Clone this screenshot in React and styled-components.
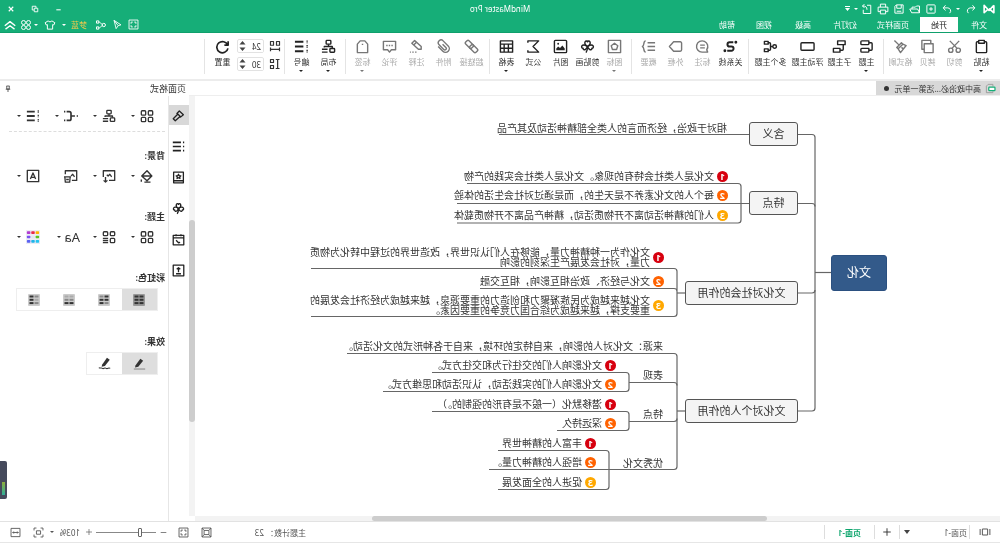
import React, { useState } from "react";
import styled, { createGlobalStyle } from "styled-components";

const GlobalStyle = createGlobalStyle`
  * {
    box-sizing: border-box;
  }
  body {
    margin: 0;
    overflow: hidden;
    background: #fff;
  }
  body, button, input, select {
    font-family: "Noto Sans", "Noto Sans CJK SC", sans-serif;
    font-size: 8px;
    color: #333;
  }
  button {
    border: 0;
    padding: 0;
    background: none;
    cursor: pointer;
  }
`;

/* the whole window is shown flipped left to right */
const Window = styled.div`
  display: flex;
  flex-direction: column;
  height: 100vh;
  transform: scaleX(-1);
`;

const Header = styled.header`
  background: #16ae78;
  color: #fff;
  border-bottom: 1px solid #0fa06c;
`;

const TitleBar = styled.div`
  display: grid;
  grid-template-columns: 1fr auto 1fr;
  align-items: center;
  height: 17px;
  padding: 0 4px;
`;

const QuickTools = styled.div`
  display: flex;
  align-items: center;
  gap: 2px;
`;

const HeaderButton = styled.button`
  display: flex;
  align-items: center;
  justify-content: center;
  width: ${(props) => props.$w || 14}px;
  height: 16px;
  color: ${(props) => props.$color || "#fff"};
`;

const AppName = styled.h1`
  margin: 0;
  font-size: 8px;
  font-weight: 400;
  line-height: 16px;
`;

const WindowControls = styled.div`
  display: flex;
  justify-content: flex-end;
  gap: 10px;
`;

const MenuBar = styled.div`
  display: flex;
  justify-content: space-between;
  height: 15px;
`;

const Tabs = styled.nav`
  display: flex;
`;

const Tab = styled.button`
  width: ${(props) => props.$w}px;
  color: ${(props) => (props.$active ? "#222" : "#fff")};
  background: ${(props) => (props.$active ? "#fff" : "none")};
  line-height: 15px;
`;

const MenuTools = styled.div`
  display: flex;
  align-items: center;
  padding-right: 2px;
`;

const Ribbon = styled.div`
  display: flex;
  height: 48px;
  border-bottom: 2px solid #ececec;
`;

const RibbonGroup = styled.div`
  display: flex;
  margin: 6px 0 5px;
  padding: 0 3px;
  padding-left: ${(props) => props.$lead || 3}px;
  border-right: 1px solid #e4e4e4;
`;

const Caret = styled.i`
  flex: none;
  border: 2px solid transparent;
  border-top-color: currentColor;
  border-bottom-width: 0;
`;

const RibbonButton = styled.button`
  display: flex;
  flex-direction: column;
  align-items: center;
  width: ${(props) => props.$w || 27}px;
  color: ${(props) => (props.$off ? "#777" : "#222")};

  ${Caret} {
    margin-top: 2px;
  }
`;

const RibbonLabel = styled.span`
  margin-top: 2px;
  line-height: 12px;
  white-space: nowrap;
  color: ${(props) => (props.$off ? "#aaa" : "#333")};
`;

const Spacing = styled.div`
  display: flex;
  flex-direction: column;
  gap: 4px;
`;

const SpacingRow = styled.label`
  display: flex;
  align-items: center;
  gap: 5px;
  height: 14px;
`;

const SpinBox = styled.span`
  display: flex;
  align-items: center;
  width: 27px;
  height: 14px;
  border: 1px solid #e2e2e2;
  border-radius: 2px;
`;

const SpinInput = styled.input`
  flex: 1;
  min-width: 0;
  padding: 0 0 0 2px;
  border: 0;
  outline: none;
`;

const Workspace = styled.div`
  display: flex;
  flex: 1;
  min-height: 0;
`;

const Editor = styled.main`
  display: flex;
  flex-direction: column;
  flex: 1;
  min-width: 0;
`;

const DocTabs = styled.div`
  display: flex;
  flex: none;
  height: 15px;
  border-bottom: 1px solid #eee;
`;

const DocTab = styled.button`
  display: flex;
  align-items: center;
  gap: 4px;
  width: 124px;
  padding-left: 4px;
  background: #d8d8d8;
  white-space: nowrap;
`;

const Dot = styled.i`
  width: 5px;
  height: 5px;
  margin-left: 2px;
  border-radius: 50%;
  background: #333;
`;

const EditorArea = styled.div`
  display: grid;
  flex: 1;
  min-height: 0;
  grid-template-columns: 1fr 6px;
  grid-template-rows: 1fr 5px;
`;

const Board = styled.div`
  position: relative;
  overflow: hidden;
`;

const Wires = styled.svg`
  position: absolute;
  left: 0;
  top: 0;
`;

const Node = styled.div`
  position: absolute;
  left: ${(props) => props.$x}px;
  top: ${(props) => props.$y}px;
  width: ${(props) => props.$w}px;
  height: 24px;
  border: 1px solid #555;
  border-radius: 3px;
  background: #f4f4f4;
  font-size: 11px;
  line-height: 22px;
  text-align: center;
`;

const RootNode = styled(Node)`
  height: 36px;
  border-color: #2b5080;
  background: #335a8a;
  color: #fff;
  font-size: 12px;
  line-height: 34px;
`;

const Topic = styled.div`
  position: absolute;
  left: ${(props) => props.$x}px;
  top: ${(props) => props.$y}px;
  display: flex;
  align-items: center;
  gap: 3px;
  min-height: 12px;
  font-size: 10px;
  line-height: 10px;
  white-space: pre;
`;

const badgeColors = { 1: "#d7000f", 2: "#ff6200", 3: "#ffa800" };

const Badge = styled.b`
  width: 11px;
  height: 11px;
  border-radius: 50%;
  background: ${(props) => badgeColors[props.$n]};
  color: #fff;
  font-size: 9px;
  line-height: 11px;
  text-align: center;
`;

const VTrack = styled.div`
  background: #f3f3f3;
  padding-top: 124px;
`;

const VThumb = styled.div`
  height: 202px;
  border-radius: 3px;
  background: #cdcdcd;
`;

const HTrack = styled.div`
  background: #f3f3f3;
`;

const HThumb = styled.div`
  height: 5px;
  width: 49%;
  margin-left: 29%;
  border-radius: 3px;
  background: #cdcdcd;
`;

const Side = styled.aside`
  display: flex;
  flex-direction: column;
  flex: none;
  width: 189px;
`;

const SideHeader = styled.div`
  display: flex;
  align-items: center;
  justify-content: space-between;
  height: 15px;
  padding: 0 4px 0 3px;
`;

const SideTitle = styled.h2`
  margin: 0;
  font-size: 9px;
  font-weight: 400;
  line-height: 15px;
`;

const SideBody = styled.div`
  display: flex;
  flex: 1;
`;

const Strip = styled.div`
  display: flex;
  flex-direction: column;
  flex: none;
  gap: 11px;
  width: 21px;
  padding-top: 9px;
  border-right: 1px solid #e6e6e6;
`;

const StripButton = styled.button`
  display: flex;
  align-items: center;
  justify-content: center;
  height: 20px;
  color: #222;
  background: ${(props) => (props.$active ? "#d8d8d8" : "none")};
`;

const Panel = styled.div`
  flex: 1;
  min-width: 0;
  padding: 10px 9px 0 3px;
`;

const Section = styled.section`
  margin-bottom: ${(props) => (props.$divided ? 18 : 25)}px;
  padding-bottom: ${(props) => (props.$divided ? 5 : 0)}px;
  border-bottom: ${(props) => (props.$divided ? "1px dashed #ddd" : "0")};
`;

const SectionTitle = styled.h3`
  margin: 0 0 5px;
  font-size: 9px;
  font-weight: 600;
  line-height: 11px;
`;

const ToolRow = styled.div`
  display: flex;
  padding-left: 9px;
`;

const ToolButton = styled.button`
  display: flex;
  flex: none;
  align-items: center;
  gap: 3px;
  width: 38px;
  height: 20px;
  color: #333;

  svg {
    padding: 2px;
  }
`;

const FontTool = styled(ToolButton)`
  font-size: 13px;
`;

const Segmented = styled.div`
  display: inline-flex;
  margin-left: 7px;
  border: 1px solid #eee;
`;

const Segment = styled.button`
  display: flex;
  align-items: center;
  justify-content: center;
  width: 35px;
  height: 21px;
  background: ${(props) => (props.$active ? "#dedede" : "#fff")};
`;

const EdgeHandle = styled.div`
  position: absolute;
  right: 0;
  top: 461px;
  display: flex;
  align-items: flex-end;
  width: 7px;
  height: 38px;
  padding: 4px 2px;
  border-radius: 2px 0 0 2px;
  background: #454a5c;
`;

const EdgeLevel = styled.div`
  width: 3px;
  height: 13px;
  background: linear-gradient(#8fae3c, #2fae9a);
`;

const StatusBar = styled.footer`
  display: flex;
  flex: none;
  align-items: center;
  height: 22px;
  border-top: 1px solid #e2e2e2;
  border-bottom: 1px solid #e6e6e6;
`;

const StatusCell = styled.div`
  display: flex;
  align-items: center;
  justify-content: ${(props) => props.$justify || "center"};
  width: ${(props) => props.$w}px;
  height: 14px;
  padding-left: ${(props) => props.$lead || 0}px;
  border-right: ${(props) => (props.$line ? "1px solid #ddd" : "0")};
  color: #555;
`;

const StatusSelect = styled.select`
  appearance: none;
  padding: 0;
  border: 0;
  outline: none;
  background: none;
  flex: 1;
  color: #555;
`;

const IconButton = styled.button`
  display: flex;
`;

const PageTab = styled.button`
  color: #0da56d;
  font-weight: 600;
`;

const StatusRight = styled.div`
  display: flex;
  align-items: center;
  margin-left: auto;
  padding-right: 4px;
`;

const StatusButton = styled.button`
  display: flex;
  align-items: center;
  justify-content: center;
  width: ${(props) => props.$w || 23}px;
  height: 16px;
  color: #555;
`;

const ZoomSlider = styled.input`
  appearance: none;
  width: 60px;
  height: 12px;
  margin: 0;
  background: linear-gradient(#888, #888) center / 100% 1px no-repeat;

  &::-webkit-slider-thumb {
    appearance: none;
    width: 4px;
    height: 9px;
    border: 1px solid #666;
    border-radius: 1px;
    background: #fff;
  }
`;

// 16 x 16 line drawings
const icons = {
  logo: <path d="M1.500 3v10L8 7.500M1.500 3 8 10l6.500-7v10L9.500 8.500" strokeWidth="2.200" />,
  undo: <path d="M6 3 3 6.500 6 10M3 6.500h6a4 4 0 0 1 2.500 7" />,
  redo: <path d="M10 3l3 3.500L10 10M13 6.500H7a4 4 0 0 0-2.500 7" />,
  newFile: <path d="M3.500 2.500h9a1 1 0 0 1 1 1v9a1 1 0 0 1-1 1h-9a1 1 0 0 1-1-1v-9a1 1 0 0 1 1-1zM8 5.500v5M5.500 8h5" />,
  folder: <path d="M2 13V4h4l1.500 1.500H12V8M2 13l2.500-5H15l-2.500 5z" />,
  save: <path d="M2.500 2.500h9l2 2v9h-11zM5 2.500V7h6V2.500M5 11h6" />,
  print: <path d="M4.500 5.500v-4h7v4M4.500 11.500h-3v-6h13v6h-3M4.500 9.500h7v5h-7z" />,
  exportFile: <path d="M8 3H3v11h10V9M8 9c0-4 2-5 6-5M11.500 1.500 14 4l-2.500 2.500" />,
  close: <path d="M3.500 3.500l9 9M12.500 3.500l-9 9" strokeWidth="2.200" />,
  restore: <path d="M2.500 6.500h7v7h-7zM6 6V2.500h7.500V10H10" strokeWidth="1.800" />,
  minimize: <path d="M3 11h10" strokeWidth="2.400" />,
  fullscreen: <path d="M1.500 1.500h13v13h-13zM4.500 7V4.500H7M9 4.500h2.500V7M11.500 9v2.500H9M7 11.500H4.500V9" />,
  send: <path d="M13 2 3 8.500l4 1.200L10 14zM13 2 7 9.700" />,
  share: <path d="M6.500 8a2.200 2.200 0 1 1-4.400 0 2.200 2.200 0 0 1 4.400 0zM6 7c2.500-.5 3-3 5-3M6 9c2.500.5 3 3 5 3M11 2.500h3v3h-3zM11 10.500h3v3h-3z" />,
  shirt: <path d="M5.500 2.500 1.500 5l1.500 3 1.500-.5v6h7v-6L13 8l1.500-3-4-2.500c-1 1.600-4 1.600-5 0z" />,
  petals: (
    <>
      <circle cx="4.700" cy="4.700" r="2.700" />
      <circle cx="11.300" cy="4.700" r="2.700" />
      <circle cx="4.700" cy="11.300" r="2.700" />
      <circle cx="11.300" cy="11.300" r="2.700" />
    </>
  ),
  collapse: <path d="M1 9l7-5.500L15 9M2 13.500 8 9l6 4.500" strokeWidth="1.800" />,
  paste: <path d="M5 3H3.500a1 1 0 0 0-1 1v9.500a1 1 0 0 0 1 1h9a1 1 0 0 0 1-1V4a1 1 0 0 0-1-1H11M5 1.500h6v3H5z" />,
  cut: (
    <>
      <circle cx="4" cy="12" r="2.300" />
      <circle cx="12" cy="12" r="2.300" />
      <path d="M5.200 10 13 2M10.800 10 3 2" />
    </>
  ),
  copy: <path d="M2 5h9.500v9.500H2zM4.500 4.500v-3H14V11h-2" />,
  painter: <path d="M14.500 1.500 10 6M7 4l5 5-1.500 1.500-5-5zM5.500 5.500 2 7l6 7.500 2.500-4M5 10.500l2-1.500" />,
  topic: <path d="M5.500 2h7.500a1 1 0 0 1 1 1v2a1 1 0 0 1-1 1H6.500a1 1 0 0 1-1-1zM5.500 10h7.500a1 1 0 0 1 1 1v2a1 1 0 0 1-1 1H6.500a1 1 0 0 1-1-1zM5.500 4H3a1 1 0 0 0-1 1v6a1 1 0 0 0 1 1h2.500" />,
  subtopic: <path d="M2 2h8v4H2zM7.500 10h7v4h-7zM4 6v5a1 1 0 0 0 1 1h2.500" />,
  floating: <rect x="1" y="4" width="14" height="8" rx="1" />,
  multi: <path d="M5.500 8a1.900 1.900 0 1 1-3.800 0 1.900 1.900 0 0 1 3.800 0zM5.500 8H8M10.500 4H9a1 1 0 0 0-1 1v6a1 1 0 0 0 1 1h1.500M10.500 2.500h4v3h-4zM10.500 10.500h4v3h-4z" />,
  relation: (
    <>
      <path d="M5 3.500h4a2.200 2.200 0 0 1 0 4.500H7a2.200 2.200 0 0 0 0 4.500h4.500" strokeWidth="2.100" />
      <circle cx="2.300" cy="3.500" r=".8" fill="currentColor" />
      <circle cx="14" cy="12.500" r=".8" fill="currentColor" />
    </>
  ),
  callout: <path d="M2.500 14h6A6 6 0 1 0 3.500 11.500zM5.500 6.500h5M5.500 9.500h5" />,
  outline: <path d="M3 3h7l4.500 5L10 13H3a1.500 1.500 0 0 1-1.500-1.500v-7A1.500 1.500 0 0 1 3 3z" />,
  summary: <path d="M1 4h8M1 8h8M1 12h8M11 2c3 0 1 5 3.500 6-2.500 1-.5 6-3.500 6" />,
  mark: <path d="M1.500 1.500h13v13h-13zM8 4.500l3.500 2.700-1.300 4H5.800l-1.300-4z" />,
  clover: (
    <>
      <path d="M8 8C5.500 6.500 4.600 4.800 5.400 3 6.200 1.600 7.500 2 8 3c.5-1 1.800-1.400 2.600 0C11.400 4.800 10.500 6.500 8 8z" />
      <path d="M8 8C5.600 6 3 5.800 2 7.400c-.8 1.600.2 2.600 1.300 2.400-.1 1.400 1.200 2.200 2.500 1.300C7.200 10.200 7.700 9 8 8z" />
      <path d="M8 8c2.400-2 5-2.200 6-.6.8 1.600-.2 2.600-1.300 2.400.1 1.400-1.200 2.200-2.500 1.300C8.800 10.200 8.300 9 8 8z" />
      <path d="M8 8c0 3 .5 5 1.600 6.500" />
    </>
  ),
  picture: (
    <>
      <rect x="1.500" y="1.500" width="13" height="13" rx="1" />
      <path d="M3.500 12v-2L6 7l2.500 2.500L10.500 8l2 2v2z" fill="currentColor" stroke="none" />
      <circle cx="10.500" cy="5" r="1" fill="currentColor" stroke="none" />
    </>
  ),
  sigma: <path d="M14 4V2H2.500l6 6-6 6H14v-2" />,
  table: <path d="M1.500 2h13v12h-13zM1.500 5.500h13M1.500 9.800h13M6 5.500V14M10.500 5.500V14" />,
  link: (
    <>
      <rect x="-4.500" y="-2.500" width="9" height="5" rx="1.500" transform="translate(10.300 5.700) rotate(-45)" />
      <rect x="-4.500" y="-2.500" width="9" height="5" rx="1.500" transform="translate(5.700 10.300) rotate(-45)" />
    </>
  ),
  clip: <path d="M9 5.500 5.500 9A1.500 1.500 0 0 0 7.700 11.200l5-5A3 3 0 0 0 8.400 2L3 7.400a4 4 0 0 0 5.700 5.700l5-5" />,
  note: <path d="M3 11V8l7-6.500 3 3L6 11zM8 3.500l3 3M8 14h1.500M11 14h1.500M14 14h1" />,
  comment: <path d="M1.500 2.500h13v9H10L8 14l-2-2.500H1.500zM4.500 7h1.500M7.300 7h1.500M10 7h1.500" />,
  label: <path d="M2.500 14V5.500L5.500 2h5l3 3.500V14a.5.500 0 0 1-.5.500H3a.5.500 0 0 1-.5-.5zM8 5v1.500" />,
  tree: (
    <>
      <rect x="5.500" y="1.500" width="5" height="4" rx=".8" />
      <path d="M8 5.500V8M4 10V8h8.500v1" />
      <rect x="1.500" y="10.200" width="5" height="4" rx=".8" />
      <path d="M9 11h6M9 14h6" />
    </>
  ),
  numbered: (
    <>
      <path d="M6 3h9M6 8h9M6 13h9" strokeWidth="2.200" />
      <path d="M2 1.500v3M2 6.500v3M2 11.500v3" strokeWidth="1.400" strokeDasharray="1.500 .7" />
    </>
  ),
  hSpace: <path d="M2 2h4v5H2zM10 2h4v5h-4zM2 10v5M14 10v5M2 12.500h12" />,
  vSpace: <path d="M2 2h5M2 14h5M4.500 2v12M10 2h4v4h-4zM10 10h4v4h-4z" />,
  reset: <path d="M2 2.500v4h4M2.500 6.500a6 6 0 1 1-.3 3.500" strokeWidth="1.800" />,
  doc: (
    <>
      <path d="M4.500 5V2h7L14 4.500V14H4.500v-2" stroke="#999" />
      <rect x="1.500" y="6" width="9" height="5" rx="1" fill="#fff" stroke="#16ae78" strokeWidth="1.800" />
    </>
  ),
  pin: <path d="M5 2h6M5.500 2v6h5V2M3.500 8.500h9M8 9v5" strokeWidth="1.500" />,
  brush: <path d="M9 2.500 14 7l-3.500 3-1-.5L4 14.500 1.500 12 7 6.500 6 5.500zM6.500 5.500l4 4" transform="matrix(-1 0 0 1 16 0)" />,
  list: <path d="M1 3h1.500M5 3h10M1 8h1.500M5 8h10M1 13h1.500M5 13h10" strokeWidth="2.100" />,
  iconBook: <path d="M2 1.500h12v13H2zM2 12h12M8 4l.9 1.800 2 .2-1.500 1.300.4 2L8 8.300l-1.800 1 .4-2L5.100 6l2-.2z" />,
  calendar: <path d="M1.500 3h13v11.500h-13zM1.500 6h13M5 1.500V4M11 1.500V4M6 11.500l2 .5 3-3" />,
  upload: <path d="M1.500 1.500h13v13h-13zM8 10V4.500M5.800 6.500 8 4.500l2.200 2M5 12h6" />,
  fourSquares: (
    <>
      <rect x="1.500" y="2" width="5" height="5" rx="1" />
      <rect x="9.500" y="2" width="5" height="5" rx="1" />
      <rect x="1.500" y="9.500" width="5" height="5" rx="1" />
      <rect x="9.500" y="9.500" width="5" height="5" rx="1" />
    </>
  ),
  branch: <path d="M0 8h1.500M3.500 8H8M13 3h-3a2 2 0 0 0-2 2v6a2 2 0 0 0 2 2h3M14.500 3H16M14.500 13H16" strokeWidth="1.900" />,
  bucket: <path d="M8 2 14 8l-6 5.500L2.500 8zM3 8h10.500M14.500 12v2.500M4 15h7" strokeWidth="1.600" />,
  imageDown: <path d="M8 13H1.500V2h13v7M5 9l2-3 2 2 1.500-1.500M12 9v6M9.800 13 12 15l2.200-2" />,
  imageTrash: <path d="M7 13H1.500V2h13v4M4 9l2-3 2 2M8 9h8M9 9.500l.5 5.500h5l.5-5.500M10.500 12h3" />,
  watermark: <path d="M1.500 1.500h13v13h-13zM5 11.500 8 4.500l3 7M6 9.500h4" />,
  squareList: (
    <>
      <rect x="1.500" y="2" width="5" height="4.500" rx="1" />
      <rect x="9.500" y="2" width="5" height="4.500" rx="1" />
      <rect x="1.500" y="9.500" width="5" height="5" rx="1" />
      <path d="M9 9.500h6M9 12h6M9 14.500h6" />
    </>
  ),
  palette: (
    <g stroke="none">
      <rect width="16" height="16" fill="#ececf4" />
      {["#ffb400", "#e8284a", "#b23ad0", "#58c322", "#dfe6f0", "#7a52f0", "#23c4f0", "#1fb4e8", "#5a62f2"].map((color, i) => (
        <rect key={color} x={1 + (i % 3) * 5} y={1.5 + Math.floor(i / 3) * 5} width="4" height="3" rx=".8" fill={color} />
      ))}
    </g>
  ),
  pencilLine: (
    <>
      <path d="M4 10.500 10 2l3.500 2.500L7.500 12 3.500 13z" fill="currentColor" stroke="none" transform="matrix(-1 0 0 1 17 0)" />
      <path d="M1 14.800h14" stroke="#888" />
    </>
  ),
  pencilWave: (
    <>
      <path d="M2 9.500 8 1l3.500 2.500L5.500 11 1.500 12z" fill="currentColor" stroke="none" transform="matrix(-1 0 0 1 13 0)" />
      <path d="M1 14c2-2 3 1.500 5 0s3 1.200 4.500 0 2.500.5 4.500-1" />
    </>
  ),
  pages: <path d="M4.500 4h7v8h-7zM1.500 4v8M14.500 4v8" />,
  plus: <path d="M8 2v12M2 8h12" />,
  minus: <path d="M3 8h10" />,
  frame: <path d="M1.500 1.500h13v13h-13zM4.500 5h7v6h-7zM1.500 1.500l3 3.500M14.500 1.500l-3 3.500M1.500 14.500l3-3.500M14.500 14.500l-3-3.500" />,
  fitPage: <path d="M5 1.500H1.500V5M11 1.500h3.500V5M5 14.500H1.500V11M11 14.500h3.500V11M5 5.500h6v5H5z" />,
  fitWidth: <path d="M1.500 2h13v12h-13zM4 8h8M5.500 6.500 4 8l1.500 1.500M10.500 6.500 12 8l-1.500 1.500" />,
};

const Icon = ({ name, size = 14, stroke = 1.3 }) => (
  <svg
    width={size}
    height={size}
    viewBox="0 0 16 16"
    fill="none"
    stroke="currentColor"
    strokeWidth={stroke}
    strokeLinejoin="round"
    aria-hidden="true"
  >
    {icons[name]}
  </svg>
);

const shades = [
  ["#333", "#333", "#333", "#333", "#333", "#333"],
  ["#333", "#888", "#333", "#333", "#888", "#333"],
  ["#aaa", "#aaa", "#888", "#888", "#333", "#333"],
  ["#888", "#333", "#aaa", "#333", "#888", "#333"],
];

const RainbowIcon = ({ kind, active }) => (
  <svg width="12" height="12" viewBox="0 0 12 12" aria-hidden="true">
    <rect width="12" height="12" rx="1" fill={active ? "#999" : "#ccc"} />
    {shades[kind].map((color, i) => (
      <rect key={i} x={1.5 + (i % 2) * 5} y={1.5 + Math.floor(i / 2) * 3.3} width="4" height="2" fill={color} />
    ))}
  </svg>
);

const tabs = [
  ["文件", 42],
  ["开始", 38],
  ["页面样式", 54],
  ["幻灯片", 42],
  ["高级", 42],
  ["视图", 36],
  ["帮助", 38],
];

const ribbonGroups = [
  {
    lead: 5,
    items: [
      { icon: "paste", label: "粘贴", caret: true },
      { icon: "cut", label: "剪切", off: true },
      { icon: "copy", label: "拷贝", off: true },
      { icon: "painter", label: "格式刷", off: true },
    ],
  },
  {
    items: [
      { icon: "topic", label: "主题", caret: true },
      { icon: "subtopic", label: "子主题" },
      { icon: "floating", label: "浮动主题", w: 37 },
      { icon: "multi", label: "多个主题", w: 37 },
    ],
  },
  {
    items: [
      { icon: "relation", label: "关系线", w: 29 },
      { icon: "callout", label: "标注", off: true },
      { icon: "outline", label: "外框", off: true },
      { icon: "summary", label: "概要", off: true },
    ],
  },
  {
    items: [
      { icon: "mark", label: "图标", caret: true, off: true },
      { icon: "clover", label: "剪贴画" },
      { icon: "picture", label: "图片" },
      { icon: "sigma", label: "公式" },
      { icon: "table", label: "表格", caret: true },
    ],
  },
  {
    items: [
      { icon: "link", label: "超链接", off: true, w: 29 },
      { icon: "clip", label: "附件", off: true },
      { icon: "note", label: "注释", off: true },
      { icon: "comment", label: "评论", off: true },
      { icon: "label", label: "标签", caret: true, off: true },
    ],
  },
  {
    items: [
      { icon: "tree", label: "布局", caret: true },
      { icon: "numbered", label: "编号", caret: true },
    ],
  },
];

const RibbonItem = ({ icon, label, caret, off, w }) => (
  <RibbonButton $w={w} $off={off}>
    <Icon name={icon} size={15} stroke={1.5} />
    <RibbonLabel $off={off}>{label}</RibbonLabel>
    {caret && <Caret />}
  </RibbonButton>
);

const nodes = [
  { x: 202, y: 26, w: 49, text: "含义" },
  { x: 202, y: 95, w: 49, text: "特点" },
  { x: 202, y: 185, w: 113, text: "文化对社会的作用" },
  { x: 202, y: 303, w: 113, text: "文化对个人的作用" },
];

const topics = [
  { x: 273, y: 26, text: "相对于政治，经济而言的人类全部精神活动及其产品" },
  { x: 272, y: 74, n: 1, text: "文化是人类社会特有的现象。文化是人类社会实践的产物" },
  { x: 272, y: 93, n: 2, text: "每个人的文化素养不是天生的，而是通过对社会生活的体验" },
  { x: 272, y: 113, n: 3, text: "人们的精神活动离不开物质活动，精神产品离不开物质载体" },
  { x: 336, y: 151, n: 1, text: "文化作为一种精神力量，能够在人们认识世界，改造世界的过程中转化为物质\n力量，对社会发展产生深刻的影响" },
  { x: 336, y: 179, n: 2, text: "文化与经济、政治相互影响，相互交融" },
  { x: 336, y: 199, n: 3, text: "文化越来越成为民族凝聚力和创造力的重要源泉，越来越成为经济社会发展的\n重要支撑，越来越成为综合国力竞争的重要因素。" },
  { x: 337, y: 244, text: "来源：文化对人的影响，来自特定的环境，来自于各种形式的文化活动。" },
  { x: 337, y: 273, text: "表现" },
  { x: 384, y: 263, n: 1, text: "文化影响人们的交往行为和交往方式。" },
  { x: 384, y: 282, n: 2, text: "文化影响人们的实践活动，认识活动和思维方式。" },
  { x: 337, y: 312, text: "特点" },
  { x: 384, y: 302, n: 1, text: "潜移默化（一般不是有形的强制的。）" },
  { x: 384, y: 321, n: 2, text: "深远持久" },
  { x: 337, y: 361, text: "优秀文化" },
  { x: 404, y: 341, n: 1, text: "丰富人的精神世界" },
  { x: 404, y: 360, n: 2, text: "增强人的精神力量。" },
  { x: 404, y: 380, n: 3, text: "促进人的全面发展" },
];

const wires = [
  "M169 176.500H185",
  "M202 38.500H188a3 3 0 0 0-3 3V312a3 3 0 0 0 3 3H202",
  "M202 107.500H188a3 3 0 0 0-3 3M185 194a3 3 0 0 0 3 3H202",
  "M251 38.500H501",
  "M251 107.500H543",
  "M533 87.500H262a3 3 0 0 0-3 3V124a3 3 0 0 0 3 3H543",
  "M315 197H323",
  "M689 172.500H326a3 3 0 0 0-3 3V217.500a3 3 0 0 0 3 3H689M520 192.500H326a3 3 0 0 0-3 3",
  "M315 315H323",
  "M653 257.500H326a3 3 0 0 0-3 3V370.500a3 3 0 0 0 3 3H511",
  "M371 286.500H326a3 3 0 0 0-3 3M323 322.500a3 3 0 0 0 3 3H371",
  "M568 276.500H374a3 3 0 0 0-3 3V292.500a3 3 0 0 0 3 3H617",
  "M568 315.500H374a3 3 0 0 0-3 3V331.500a3 3 0 0 0 3 3H443",
  "M502 354.500H394a3 3 0 0 0-3 3V390.500a3 3 0 0 0 3 3H502",
];

const MindMap = () => (
  <Board>
    <Wires width="811" height="420" fill="none" stroke="#666" strokeWidth="1.2">
      {wires.map((d) => (
        <path key={d} d={d} />
      ))}
    </Wires>
    <RootNode $x={113} $y={159} $w={56}>文化</RootNode>
    {nodes.map((node) => (
      <Node key={node.text} $x={node.x} $y={node.y} $w={node.w}>{node.text}</Node>
    ))}
    {topics.map((topic) => (
      <Topic key={topic.text} $x={topic.x} $y={topic.y}>
        {topic.n && <Badge $n={topic.n}>{topic.n}</Badge>}
        <span>{topic.text}</span>
      </Topic>
    ))}
  </Board>
);

const Tool = ({ name, caret = true }) => (
  <ToolButton aria-label={name}>
    <Icon name={name} size={18} stroke={1.5} />
    {caret && <Caret />}
  </ToolButton>
);

const stripIcons = ["brush", "list", "iconBook", "clover", "calendar", "upload"];

const FormatPanel = () => {
  const [rainbow, setRainbow] = useState(0);
  const [effect, setEffect] = useState("pencilLine");

  return (
    <Side>
      <SideHeader>
        <SideTitle>页面格式</SideTitle>
        <IconButton aria-label="固定">
          <Icon name="pin" size={8} />
        </IconButton>
      </SideHeader>
      <SideBody>
        <Strip>
          {stripIcons.map((name) => (
            <StripButton key={name} $active={name === "brush"} aria-label={name}>
              <Icon name={name} size={13} stroke={1.6} />
            </StripButton>
          ))}
        </Strip>
        <Panel>
          <Section $divided>
            <ToolRow>
              <Tool name="fourSquares" />
              <Tool name="tree" />
              <Tool name="branch" />
              <Tool name="numbered" />
            </ToolRow>
          </Section>
          <Section>
            <SectionTitle>背景:</SectionTitle>
            <ToolRow>
              <Tool name="bucket" />
              <Tool name="imageDown" />
              <Tool name="imageTrash" caret={false} />
              <Tool name="watermark" />
            </ToolRow>
          </Section>
          <Section>
            <SectionTitle>主题:</SectionTitle>
            <ToolRow>
              <Tool name="fourSquares" />
              <Tool name="squareList" />
              <FontTool>
                Aa
                <Caret />
              </FontTool>
              <Tool name="palette" />
            </ToolRow>
          </Section>
          <Section>
            <SectionTitle>彩虹色:</SectionTitle>
            <Segmented>
              {shades.map((_, i) => (
                <Segment key={i} $active={i === rainbow} aria-label={`彩虹色 ${i + 1}`} onClick={() => setRainbow(i)}>
                  <RainbowIcon kind={i} active={i === rainbow} />
                </Segment>
              ))}
            </Segmented>
          </Section>
          <Section>
            <SectionTitle>效果:</SectionTitle>
            <Segmented>
              {["pencilLine", "pencilWave"].map((name) => (
                <Segment key={name} $active={name === effect} aria-label={name} onClick={() => setEffect(name)}>
                  <Icon name={name} size={13} />
                </Segment>
              ))}
            </Segmented>
          </Section>
        </Panel>
      </SideBody>
    </Side>
  );
};

const Spinner = ({ icon, name, initial }) => {
  const [value, setValue] = useState(initial);
  return (
    <SpacingRow>
      <Icon name={icon} size={12} stroke={1.6} />
      <SpinBox>
        <SpinInput aria-label={name} value={value} onChange={(e) => setValue(e.target.value)} />
        <svg width="9" height="12" viewBox="0 0 9 12" fill="#444" aria-hidden="true">
          <path d="M1.500 4.500 4.500 1l3 3.500zM1.500 7.500h6L4.500 11z" />
        </svg>
      </SpinBox>
    </SpacingRow>
  );
};

const App = () => {
  const [zoom, setZoom] = useState(62);

  return (
    <>
      <GlobalStyle />
      <Window>
        <Header>
          <TitleBar>
            <QuickTools>
              <HeaderButton aria-label="MindMaster">
                <Icon name="logo" size={12} />
              </HeaderButton>
              <HeaderButton $w={18} aria-label="撤销">
                <Icon name="undo" size={12} />
              </HeaderButton>
              <Caret />
              <HeaderButton aria-label="重做">
                <Icon name="redo" size={12} />
              </HeaderButton>
              <HeaderButton aria-label="新建">
                <Icon name="newFile" size={12} />
              </HeaderButton>
              <HeaderButton aria-label="打开">
                <Icon name="folder" size={12} />
              </HeaderButton>
              <HeaderButton aria-label="保存">
                <Icon name="save" size={12} />
              </HeaderButton>
              <HeaderButton aria-label="打印">
                <Icon name="print" size={12} />
              </HeaderButton>
              <HeaderButton aria-label="导出">
                <Icon name="exportFile" size={12} />
              </HeaderButton>
              <Caret />
              <HeaderButton $w={8} aria-label="更多">
                <svg width="5" height="5" viewBox="0 0 5 5" fill="#fff">
                  <path d="M0 0h5v1H0zM0 2h5L2.500 5z" />
                </svg>
              </HeaderButton>
            </QuickTools>
            <AppName>MindMaster Pro</AppName>
            <WindowControls>
              <HeaderButton aria-label="最小化">
                <Icon name="minimize" size={7} />
              </HeaderButton>
              <HeaderButton aria-label="还原">
                <Icon name="restore" size={8} />
              </HeaderButton>
              <HeaderButton aria-label="关闭">
                <Icon name="close" size={8} />
              </HeaderButton>
            </WindowControls>
          </TitleBar>
          <MenuBar>
            <Tabs>
              {tabs.map(([label, w]) => (
                <Tab key={label} $w={w} $active={label === "开始"}>
                  {label}
                </Tab>
              ))}
            </Tabs>
            <MenuTools>
              <HeaderButton $w={16} aria-label="全屏">
                <Icon name="fullscreen" size={11} />
              </HeaderButton>
              <HeaderButton $w={16} aria-label="发送">
                <Icon name="send" size={11} />
              </HeaderButton>
              <HeaderButton $w={18} aria-label="分享">
                <Icon name="share" size={12} />
              </HeaderButton>
              <HeaderButton $w={26} $color="#f2c94c">梦蓝</HeaderButton>
              <Caret />
              <HeaderButton $w={24} aria-label="皮肤">
                <Icon name="shirt" size={12} />
              </HeaderButton>
              <Caret />
              <HeaderButton $w={16} aria-label="应用">
                <Icon name="petals" size={12} />
              </HeaderButton>
              <HeaderButton $w={16} aria-label="收起">
                <Icon name="collapse" size={12} />
              </HeaderButton>
            </MenuTools>
          </MenuBar>
        </Header>

        <Ribbon>
          {ribbonGroups.map((group, i) => (
            <RibbonGroup key={i} $lead={group.lead}>
              {group.items.map((item) => (
                <RibbonItem key={item.label} {...item} />
              ))}
            </RibbonGroup>
          ))}
          <RibbonGroup>
            <Spacing>
              <Spinner icon="hSpace" name="水平间距" initial="24" />
              <Spinner icon="vSpace" name="垂直间距" initial="30" />
            </Spacing>
            <RibbonItem icon="reset" label="重置" w={29} />
          </RibbonGroup>
        </Ribbon>

        <Workspace>
          <Editor>
            <DocTabs>
              <DocTab>
                <Icon name="doc" size={11} />
                高中政治必...活第一单元
                <Dot />
              </DocTab>
            </DocTabs>
            <EditorArea>
              <MindMap />
              <VTrack>
                <VThumb />
              </VTrack>
              <HTrack>
                <HThumb />
              </HTrack>
            </EditorArea>
          </Editor>
          <FormatPanel />
        </Workspace>

        <StatusBar>
          <StatusCell $w={31} $line>
            <Icon name="pages" size={12} />
          </StatusCell>
          <StatusCell $w={70} $lead={2} $line>
            <StatusSelect aria-label="页面" defaultValue="1">
              <option value="1">页面-1</option>
            </StatusSelect>
            <svg width="12" height="5" viewBox="0 0 12 5" fill="#444" aria-hidden="true">
              <path d="M2 0h6L5 4z" />
            </svg>
          </StatusCell>
          <StatusCell $w={25} $line>
            <IconButton aria-label="添加页面">
              <Icon name="plus" size={10} stroke={1.5} />
            </IconButton>
          </StatusCell>
          <StatusCell $w={50} $line>
            <PageTab>页面-1</PageTab>
          </StatusCell>
          <StatusRight>
            <StatusCell $w={88} $justify="flex-start">主题计数： 23</StatusCell>
            <StatusButton aria-label="适应画布">
              <Icon name="frame" size={11} />
            </StatusButton>
            <StatusButton aria-label="全屏显示">
              <Icon name="fullscreen" size={11} />
            </StatusButton>
            <StatusButton $w={16} aria-label="缩小">
              <Icon name="minus" size={9} />
            </StatusButton>
            <ZoomSlider
              type="range"
              min="0"
              max="250"
              value={zoom}
              aria-label="缩放"
              onChange={(e) => setZoom(Number(e.target.value))}
            />
            <StatusButton $w={14} aria-label="放大">
              <Icon name="plus" size={8} />
            </StatusButton>
            <StatusCell $w={32} $lead={2}>
              <StatusSelect aria-label="缩放比例" defaultValue="103">
                <option value="103">103%</option>
              </StatusSelect>
              <Caret />
            </StatusCell>
            <StatusButton aria-label="适应页面">
              <Icon name="fitPage" size={11} />
            </StatusButton>
            <StatusButton aria-label="适应宽度">
              <Icon name="fitWidth" size={11} />
            </StatusButton>
          </StatusRight>
        </StatusBar>

        <EdgeHandle>
          <EdgeLevel />
        </EdgeHandle>
      </Window>
    </>
  );
};

export default App;
